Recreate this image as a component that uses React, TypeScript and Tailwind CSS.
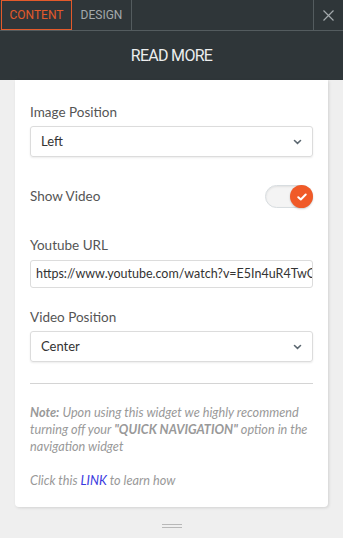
import React from "react";

function Chevron() {
  return (
    <svg width="9" height="6" viewBox="0 0 9 6" className="shrink-0">
      <path d="M1.5 1.5 L4.5 4.3 L7.5 1.5" fill="none" stroke="#5b6770" strokeWidth="1.6" strokeLinecap="round" />
    </svg>
  );
}

function Select({ value }: { value: string }) {
  return (
    <div className="h-[31px] border border-[#dcdcdc] rounded-[3px] shadow-[0_1px_2px_rgba(0,0,0,0.08)] flex items-center justify-between pl-[10px] pr-[10px] text-[13px] text-[#333]">
      <span>{value}</span>
      <Chevron />
    </div>
  );
}

export default function App() {
  return (
    <div
      className="w-[343px] h-[538px] bg-[#efefef] flex flex-col overflow-hidden"
      style={{ fontFamily: "Lato, 'Open Sans', sans-serif" }}
    >
      <div className="bg-[#2f3639] shrink-0">
        <div className="h-[31px] flex border-b border-[#545c5f]">
          <div
            className="ml-[1px] w-[71px] h-[30px] border border-[#e35a2b] flex items-center justify-center text-[12px] text-[#e35a2b]"
            style={{ fontFamily: "Roboto, sans-serif" }}
          >
            CONTENT
          </div>
          <div
            className="w-[60px] h-[30px] border-r border-[#545c5f] flex items-center justify-center text-[12px] text-[#a3a9ac]"
            style={{ fontFamily: "Roboto, sans-serif" }}
          >
            DESIGN
          </div>
          <div className="flex-1" />
          <div className="w-[30px] h-[30px] border-l border-[#545c5f] flex items-center justify-center">
            <svg width="11" height="11" viewBox="0 0 11 11">
              <path d="M0.5 0.5 L10.5 10.5 M10.5 0.5 L0.5 10.5" stroke="#a3a9ac" strokeWidth="1.2" />
            </svg>
          </div>
        </div>
        <div
          className="h-[49px] flex items-center justify-center text-[16px] text-[#eceeee] tracking-[-0.7px]"
          style={{ fontFamily: "Roboto, sans-serif" }}
        >
          READ MORE
        </div>
      </div>

      <div className="mx-[15px] bg-white rounded-b-[4px] shadow-[1px_1px_3px_rgba(0,0,0,0.12)] px-[15px] pt-[24px] pb-[18px] shrink-0">
        <div className="text-[13.5px] leading-[16px] text-[#555]">Image Position</div>
        <div className="mt-[6px]">
          <Select value="Left" />
        </div>

        <div className="mt-[28px] h-[23px] flex items-center justify-between">
          <span className="text-[13.5px] text-[#555]">Show Video</span>
          <div className="w-[48px] h-[23px] rounded-full bg-[#f4f4f4] border border-[#d8dde0] shadow-[inset_0_1px_2px_rgba(0,0,0,0.08)] flex items-center justify-end">
            <div className="w-[23px] h-[23px] -mr-[1px] rounded-full bg-[#f05a28] shadow-[0_1px_2px_rgba(0,0,0,0.2)] flex items-center justify-center">
              <svg width="10" height="8" viewBox="0 0 10 8">
                <path d="M1.3 4.2 L3.8 6.5 L8.7 1.5" fill="none" stroke="white" strokeWidth="2" strokeLinecap="round" strokeLinejoin="round" />
              </svg>
            </div>
          </div>
        </div>

        <div className="mt-[29px] text-[13.5px] leading-[16px] text-[#555]">Youtube URL</div>
        <div className="mt-[7px] h-[28px] border border-[#dcdcdc] rounded-[3px] flex items-center pl-[5px] overflow-hidden whitespace-nowrap text-[12.5px] text-[#333]">
          https://www.youtube.com/watch?v=E5In4uR4TwQ
        </div>

        <div className="mt-[21px] text-[13.5px] leading-[16px] text-[#555]">Video Position</div>
        <div className="mt-[6px]">
          <Select value="Center" />
        </div>

        <div className="mt-[21px] h-px bg-[#d4d4d4]" />

        <div className="mt-[20px] text-[12.7px] leading-[17px] italic text-[#999]">
          <span className="font-bold">Note:</span> Upon using this widget we highly recommend turning off your{" "}
          <span className="font-bold">"QUICK NAVIGATION"</span> option in the navigation widget
        </div>
        <div className="mt-[17px] text-[12.7px] leading-[17px] italic text-[#999]">
          Click this <span className="text-[#3a3ae0]">LINK</span> to learn how
        </div>
      </div>

      <div className="mt-[17px] flex flex-col items-center gap-[2px]">
        <div className="w-[20px] h-px bg-[#b8b8b8]" />
        <div className="w-[20px] h-px bg-[#b8b8b8]" />
      </div>
    </div>
  );
}
